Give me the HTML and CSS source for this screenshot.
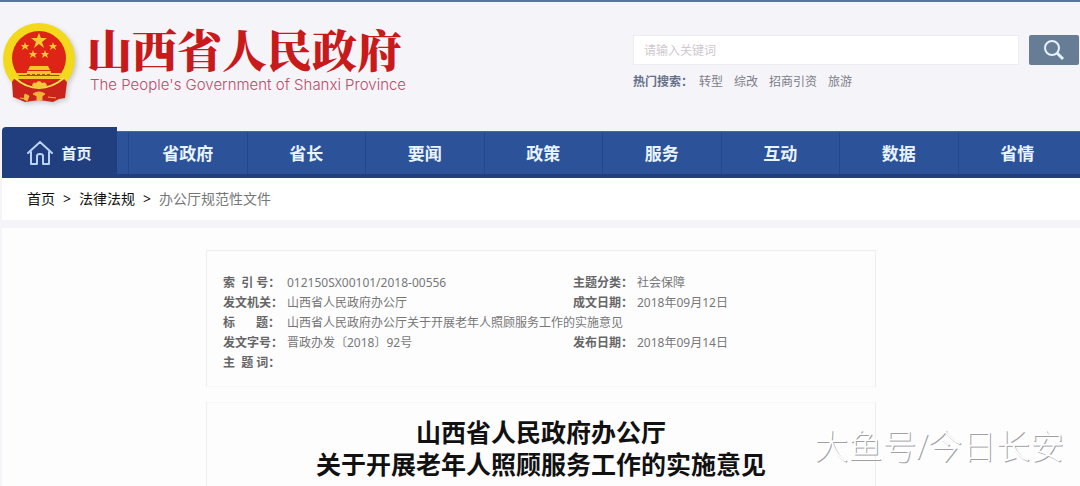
FILE: index.html
```html
<!DOCTYPE html>
<html lang="zh-CN">
<head>
    <meta charset="UTF-8">
    <title>山西省人民政府办公厅关于开展老年人照顾服务工作的实施意见</title>
    <link rel="stylesheet" href="styles.css">
</head>
<body>
<header class="header">
    <a class="logo" href="#">
        <svg class="emblem" viewBox="0 0 76 84" width="76" height="84" aria-hidden="true">
            <circle cx="36" cy="37" r="36" fill="#f3d91b"/>
            <path d="M11 57L61 57 64 60 62 76 56 77 50 80 36 78 22 80 15 77 10 75 9 60Z" fill="#c9231b"/>
            <circle cx="36" cy="36" r="27" fill="#dd2416"/>
            <path d="M36 11l2 5h6l-5 4 2 6-5-4-5 4 2-6-5-4h6z" fill="#f9c931"/>
            <path id="star" d="M22 20l1 3h3l-2 2 1 3-3-2-3 2 1-3-2-2h3z" fill="#f9c931"/>
            <use href="#star" x="28"/>
            <use href="#star" x="8" y="8"/>
            <use href="#star" x="20" y="8"/>
            <path d="M27 44h18l2 4H25zM24 49h24v3H24zM14 51h44v2H14zM13 54h46l-4 3H17z" fill="#f3c72a"/>
            <path d="M24 53h24" stroke="#a8501a" stroke-width="2" stroke-dasharray="3 2"/>
            <path d="M12 56Q23 66 36 66T61 56" fill="none" stroke="#f6dc4a" stroke-width="2"/>
            <path d="M29 64q1-5 4-3 3-4 6 0 4-2 5 3l-4 2h-7z" fill="#f5c83a"/>
            <path d="M30 72q6-4 12 0l-3 2v4h-5v-4zM22 72l4 2-2 5-3-2zM17 76l5 1M45 75l8 1" fill="#f0b63c" stroke="#f0b63c"/>
        </svg>
        <span class="logo-text">
            <span class="logo-cn">山西省人民政府</span>
            <span class="logo-en">The People's Government of Shanxi Province</span>
        </span>
    </a>
    <div class="search">
        <form class="search-form">
            <input class="search-input" type="text" placeholder="请输入关键词" aria-label="请输入关键词">
            <button class="search-btn" type="button" aria-label="搜索">
                <svg viewBox="0 0 22 22" width="22" height="22" fill="none" stroke="#e3f1fb" stroke-width="2">
                    <circle cx="9" cy="9" r="7"/>
                    <path d="M14 14l6 6" stroke-width="3"/>
                </svg>
            </button>
        </form>
        <div class="hot">
            <strong>热门搜索：</strong>
            <a href="#">转型</a>
            <a href="#">综改</a>
            <a href="#">招商引资</a>
            <a href="#">旅游</a>
        </div>
    </div>
</header>
<nav class="nav">
    <a class="nav-home" href="#">
        <svg viewBox="0 0 26 24" width="26" height="24" fill="none" stroke="#b9d3f5" stroke-width="2" stroke-linejoin="round" stroke-linecap="round">
            <path d="M1 12L13 1l12 11M4 11v12h6v-8q0-2 3-2t3 2v8h6V11"/>
        </svg>
        首页
    </a>
    <div class="nav-list">
        <a href="#">省政府</a>
        <a href="#">省长</a>
        <a href="#">要闻</a>
        <a href="#">政策</a>
        <a href="#">服务</a>
        <a href="#">互动</a>
        <a href="#">数据</a>
        <a href="#">省情</a>
    </div>
</nav>
<div class="crumb">
    <a href="#">首页</a>
    <span>&gt;</span>
    <a href="#">法律法规</a>
    <span>&gt;</span>
    <span class="crumb-now">办公厅规范性文件</span>
</div>
<main class="main">
    <div class="info">
        <table class="info-table">
            <tr>
                <th class="c1" scope="row">索&nbsp; 引 号：</th>
                <td class="c2">012150SX00101/2018-00556</td>
                <th class="c1" scope="row">主题分类：</th>
                <td>社会保障</td>
            </tr>
            <tr>
                <th scope="row">发文机关：</th>
                <td>山西省人民政府办公厅</td>
                <th scope="row">成文日期：</th>
                <td>2018年09月12日</td>
            </tr>
            <tr>
                <th scope="row">标&emsp;&ensp;&nbsp;题：</th>
                <td colspan="3">山西省人民政府办公厅关于开展老年人照顾服务工作的实施意见</td>
            </tr>
            <tr>
                <th scope="row">发文字号：</th>
                <td>晋政办发〔2018〕92号</td>
                <th scope="row">发布日期：</th>
                <td>2018年09月14日</td>
            </tr>
            <tr>
                <th scope="row">主&nbsp; 题 词：</th>
                <td colspan="3"></td>
            </tr>
        </table>
    </div>
    <div class="article">
        <h1>山西省人民政府办公厅<br>关于开展老年人照顾服务工作的实施意见</h1>
    </div>
</main>
<div class="watermark">大鱼号/今日长安</div>
</body>
</html>
```
FILE: styles.css
```css
*{
    margin:0;
    padding:0;
    box-sizing: border-box;
}
html,body{
    min-height: 100%;
}
body{
    position: relative;
    display: flex;
    flex-direction: column;
    min-height: 100vh;
    background: #f5f4f8;
    font-family: "Noto Sans","Noto Sans CJK SC",sans-serif;
    font-size: 12px;
    color: #777;
}
a{
    color: inherit;
    text-decoration: none;
}
.header{
    display: flex;
    justify-content: space-between;
    align-items: flex-start;
    height: 127px;
    padding: 20px 1px 0 3px;
    border-top: 2px solid #5b74a8;
}
.logo{
    display: flex;
    gap: 8px;
}
.emblem{
    filter: drop-shadow(2px 2px 2px #c8c8c8);
}
.logo-text{
    display: flex;
    flex-direction: column;
}
.logo-cn{
    font-family: "Noto Serif CJK SC","Noto Sans CJK SC",serif;
    font-size: 45px;
    line-height: 53px;
    font-weight: 900;
    color: #c8191b;
}
.logo-en{
    padding-left: 3px;
    font-family: "Inter","Liberation Sans",sans-serif;
    font-size: 15px;
    line-height: 20px;
    font-weight: 300;
    color: #c04a68;
}
.search{
    width: 446px;
    padding-top: 13px;
}
.search-form{
    display: flex;
    gap: 10px;
}
.search-input{
    flex: 1;
    min-width: 0;
    height: 30px;
    padding: 0 10px;
    border: 1px solid #ededf1;
    background: #fff;
    font: inherit;
    outline: none;
}
.search-input::placeholder{
    color: #cfc8ce;
}
.search-btn{
    display: flex;
    align-items: center;
    justify-content: center;
    width: 50px;
    height: 30px;
    border: 0;
    border-radius: 2px;
    background: #677d96;
}
.hot{
    display: flex;
    gap: 11px;
    line-height: 18px;
    margin-top: 8px;
    color: #7c7c88;
}
.hot strong{
    margin-right: -5px;
    color: #66708a;
}
.nav{
    display: flex;
    align-items: flex-end;
    margin-left: 2px;
    color: #e8f4ff;
    font-weight: bold;
}
.nav-home{
    display: flex;
    align-items: center;
    justify-content: center;
    gap: 8px;
    width: 115px;
    height: 51px;
    border-radius: 4px 0 0 0;
    background: #213f7e;
    font-size: 15px;
}
.nav-list{
    flex: 1;
    display: flex;
    padding: 0 4px 0 11px;
    border-top: 1px solid #466aa5;
    border-bottom: 4px solid #213f7e;
    background: #2c529a;
    font-size: 17px;
}
.nav-list a{
    flex: 1;
    height: 42px;
    line-height: 43px;
    border-left: 1px solid #24468a;
    text-align: center;
}
.crumb{
    display: flex;
    gap: 8px;
    height: 42px;
    line-height: 42px;
    margin-left: 2px;
    padding-left: 25px;
    background: #fff;
    font-size: 14px;
    color: #111;
}
.crumb-now{
    color: #777;
}
.main{
    flex: 1;
    display: flex;
    flex-direction: column;
    margin: 8px 0 0 2px;
    padding-top: 22px;
    background: #fdfdfe;
}
.info,
.article{
    width: 670px;
    max-width: 100%;
    margin: 0 auto;
    border: 1px solid #ededf0;
}
.info{
    padding: 22px 15px 13px 16px;
    margin-bottom: 15px;
    border-bottom-color: #f8f5fa;
}
.info-table{
    width: 100%;
    table-layout: fixed;
    border-collapse: collapse;
    line-height: 20px;
    text-align: left;
}
.info-table tr{
    height: 20px;
}
.info-table th{
    color: #666;
    white-space: nowrap;
}
.c1{
    width: 64px;
}
.c2{
    width: 286px;
}
.article{
    flex: 1;
    padding-top: 13px;
    border-top-color: #f8f5fa;
    border-bottom: 0;
}
.article h1{
    font-size: 25px;
    line-height: 32px;
    text-align: center;
    color: #111;
}
.watermark{
    position: absolute;
    right: 16px;
    bottom: 16px;
    font-size: 34px;
    line-height: 48px;
    font-weight: 300;
    color: #fff;
    text-shadow: 1px 1px 0 #a0a0a4;
}
```
